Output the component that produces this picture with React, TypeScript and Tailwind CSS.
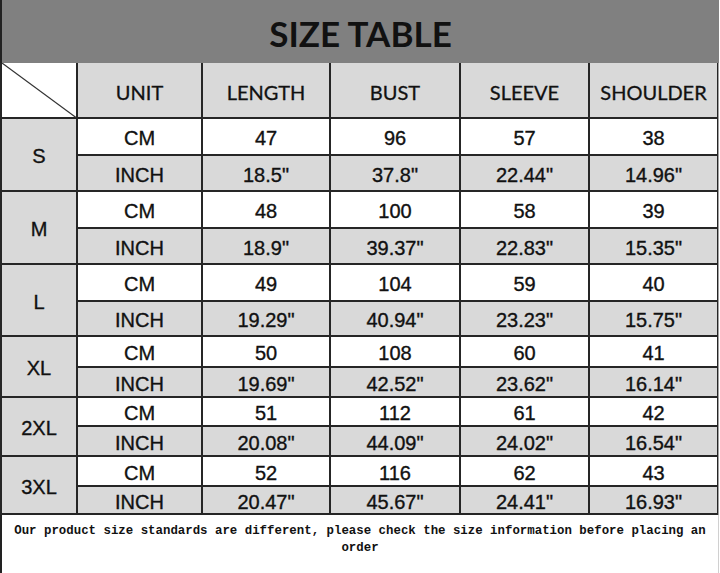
import React from "react";

const rows = [
  { size: "S", cm: ["47", "96", "57", "38"], inch: ['18.5"', '37.8"', '22.44"', '14.96"'] },
  { size: "M", cm: ["48", "100", "58", "39"], inch: ['18.9"', '39.37"', '22.83"', '15.35"'] },
  { size: "L", cm: ["49", "104", "59", "40"], inch: ['19.29"', '40.94"', '23.23"', '15.75"'] },
  { size: "XL", cm: ["50", "108", "60", "41"], inch: ['19.69"', '42.52"', '23.62"', '16.14"'] },
  { size: "2XL", cm: ["51", "112", "61", "42"], inch: ['20.08"', '44.09"', '24.02"', '16.54"'] },
  { size: "3XL", cm: ["52", "116", "62", "43"], inch: ['20.47"', '45.67"', '24.41"', '16.93"'] },
];

const headers = ["UNIT", "LENGTH", "BUST", "SLEEVE", "SHOULDER"];

const dataCls =
  "flex items-center justify-center pt-[3px] text-[20px] text-[#111] [-webkit-text-stroke:0.35px_#111] font-['Liberation_Sans',Arial,sans-serif]";

export default function App() {
  return (
    <div className="w-[720px] h-[573px] bg-white overflow-hidden">
      <div className="w-[719px]">
        <div className="h-[63px] bg-[#808080] border-l-2 border-[#222] flex items-center justify-center">
          <span className="text-[35px] font-bold text-[#111] font-['Lato',sans-serif] leading-none pt-[4px]">
            SIZE TABLE
          </span>
        </div>
        <div className="grid bg-[#262626] pl-[2px] pb-[2px] border-r border-[#a0a0a0] gap-x-[2px] gap-y-[2px] grid-cols-[74px_123px_126px_128px_127px_127px] grid-rows-[54px_35px_34px_35px_34px_35px_33px_29px_28px_27px_28px_28px_26px]">
          <div className="bg-white relative">
            <svg className="absolute inset-0" width="74" height="56" viewBox="0 0 74 56">
              <line x1="0" y1="0" x2="76" y2="56" stroke="#333" strokeWidth="1.2" />
            </svg>
          </div>
          {headers.map((h) => (
            <div
              key={h}
              className="bg-[#d9d9d9] flex items-center justify-center text-[20px] text-[#111] [-webkit-text-stroke:0.3px_#111] font-['Lato',sans-serif] pt-[4px]"
            >
              {h}
            </div>
          ))}
          {rows.map((r) => (
            <React.Fragment key={r.size}>
              <div className={`row-span-2 bg-[#d9d9d9] ${dataCls}`}>{r.size}</div>
              <div className={`bg-white ${dataCls}`}>CM</div>
              {r.cm.map((v, i) => (
                <div key={"c" + i} className={`bg-white ${dataCls}`}>
                  {v}
                </div>
              ))}
              <div className={`bg-[#d9d9d9] ${dataCls}`}>INCH</div>
              {r.inch.map((v, i) => (
                <div key={"i" + i} className={`bg-[#d9d9d9] ${dataCls}`}>
                  {v}
                </div>
              ))}
            </React.Fragment>
          ))}
        </div>
        <div className="h-[58px] border-l-2 border-[#222] border-r border-r-[#d0d0d0] pt-[8px] px-[4px] text-center text-[12.4px] leading-[17px] font-bold text-[#111] font-['Liberation_Mono','Courier_New',monospace]">
          Our product size standards are different, please check the size information before placing an order
        </div>
      </div>
    </div>
  );
}
